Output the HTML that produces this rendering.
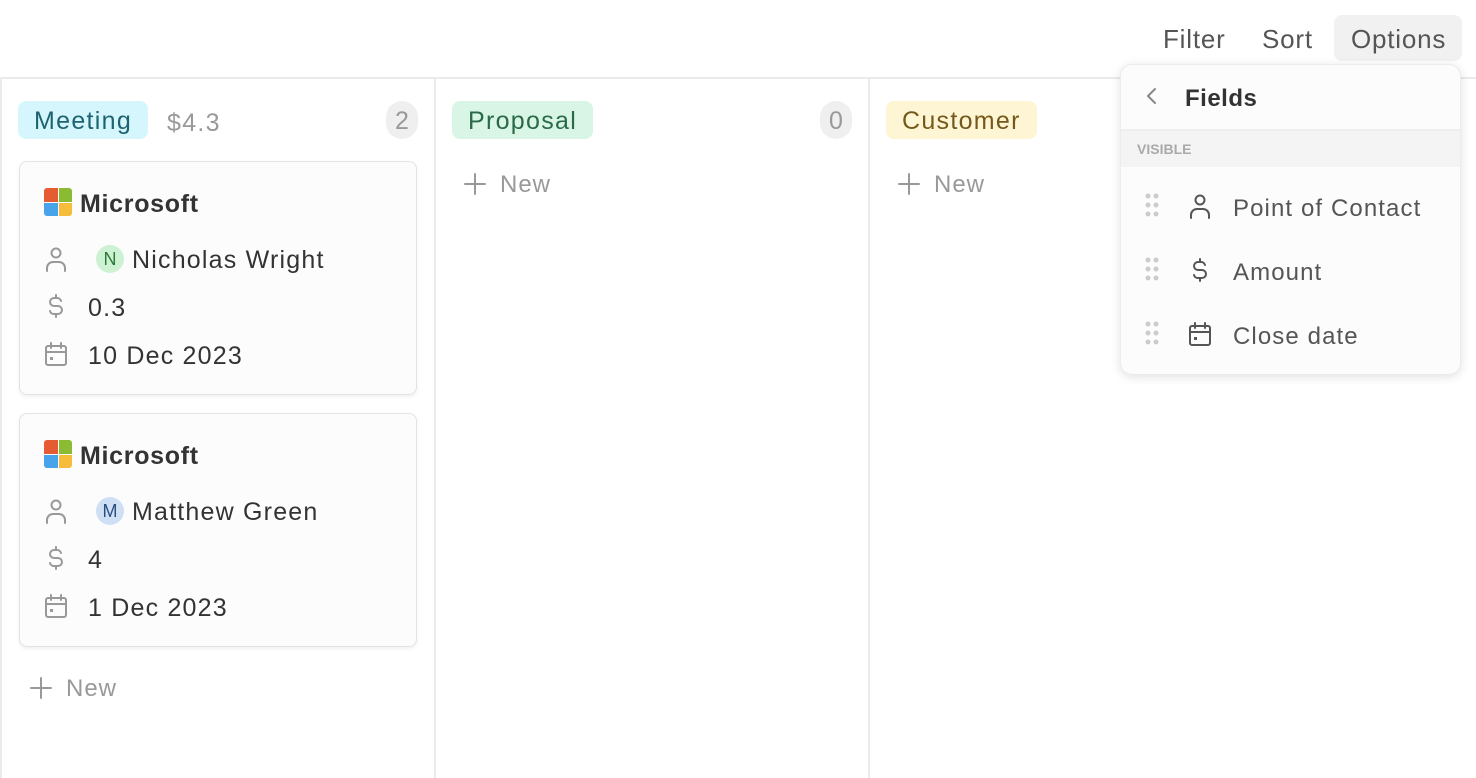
<!DOCTYPE html>
<html><head><meta charset="utf-8"><style>
*{box-sizing:border-box;margin:0;padding:0}
body{width:1476px;height:764px;overflow:hidden;background:#fff;font-family:"Liberation Sans",sans-serif;position:relative;color:#333}
.abs{position:absolute}
.topline{left:0;top:77px;width:1476px;height:2px;background:#ebebeb}
.vl{top:78px;width:2px;height:700px;background:#ebebeb}
.tb{font-size:26px;color:#555;top:24px;letter-spacing:0.8px}
.tag{height:38px;border-radius:8px;font-size:25px;line-height:40px;padding:0 16px;letter-spacing:1.3px}
.cnt{width:32px;height:38px;border-radius:16px;background:#efefef;color:#999;font-size:25px;line-height:40px;text-align:center}
.card{left:19px;width:398px;height:234px;border:1px solid #e3e3e3;border-radius:8px;background:#fcfcfc;box-shadow:0 2px 4px rgba(0,0,0,.06)}
.ms{width:28px;height:28px;display:grid;grid-template-columns:1fr 1fr;gap:1px;border-radius:3px;overflow:hidden}
.t24{font-size:25px;color:#333;letter-spacing:1.2px}
.new{font-size:24px;color:#999;letter-spacing:1px}
svg{position:absolute;fill:none;stroke:#999;stroke-width:2;stroke-linecap:round;stroke-linejoin:round}
.av{width:28px;height:28px;border-radius:14px;font-size:18px;line-height:28px;text-align:center}
.di{font-size:24px;color:#555;letter-spacing:1.1px}
</style></head><body>
<div class="abs topline"></div>
<div class="abs vl" style="left:0"></div>
<div class="abs vl" style="left:434px"></div>
<div class="abs vl" style="left:868px"></div>

<div class="abs tb" style="left:1163px">Filter</div>
<div class="abs tb" style="left:1262px">Sort</div>
<div class="abs" style="left:1334px;top:15px;width:128px;height:46px;border-radius:8px;background:#f1f1f1"></div>
<div class="abs tb" style="left:1351px">Options</div>

<div class="abs tag" style="left:18px;top:101px;background:#d5f6fd;color:#1e6370">Meeting</div>
<div class="abs" style="left:167px;top:109px;font-size:25px;color:#999;letter-spacing:1.3px">$4.3</div>
<div class="abs cnt" style="left:386px;top:101px">2</div>

<div class="abs card" style="top:161px"></div>
<div class="abs card" style="top:413px"></div>

<svg width="1476" height="764" style="left:0;top:0" stroke="#999">
  <path d="M31 688h20M41 678v20"/>
  <path d="M465 184h20M475 174v20"/>
  <path d="M899 184h20M909 174v20"/>
</svg>
<div class="abs new" style="left:66px;top:675px">New</div>
<div class="abs new" style="left:500px;top:171px">New</div>
<div class="abs new" style="left:934px;top:171px">New</div>

<div class="abs tag" style="left:452px;top:101px;background:#d9f5e6;color:#2a6a48">Proposal</div>
<div class="abs cnt" style="left:820px;top:101px">0</div>
<div class="abs tag" style="left:886px;top:101px;background:#fdf5d4;color:#75591a">Customer</div>

<div class="abs" style="left:1120px;top:64px;width:341px;height:311px;border-radius:12px;background:#fcfcfc;box-shadow:0 2px 10px rgba(0,0,0,.12);border:1px solid #ececec;overflow:hidden">
  <div class="abs" style="left:0;top:64px;width:341px;height:2px;background:#eeeeee"></div>
  <div class="abs" style="left:0;top:66px;width:341px;height:36px;background:#f4f4f4"></div>
  <div class="abs" style="left:16px;top:76px;font-size:14px;font-weight:bold;color:#aaa">VISIBLE</div>
  <div class="abs" style="left:64px;top:20px;font-size:24px;font-weight:bold;color:#333;letter-spacing:0.5px">Fields</div>
  <div class="abs di" style="left:112px;top:130px">Point of Contact</div>
  <div class="abs di" style="left:112px;top:194px">Amount</div>
  <div class="abs di" style="left:112px;top:258px">Close date</div>
</div>
<svg style="left:1140px;top:84px" width="24" height="24" viewBox="0 0 24 24"><path d="M15 5l-7 7 7 7" stroke="#888"/></svg>

<svg width="1476" height="764" style="left:0;top:0;stroke:none">
  <g fill="#ccc">
    <circle cx="1148" cy="196" r="2.5"/><circle cx="1156" cy="196" r="2.5"/><circle cx="1148" cy="205" r="2.5"/><circle cx="1156" cy="205" r="2.5"/><circle cx="1148" cy="214" r="2.5"/><circle cx="1156" cy="214" r="2.5"/>
    <circle cx="1148" cy="260" r="2.5"/><circle cx="1156" cy="260" r="2.5"/><circle cx="1148" cy="269" r="2.5"/><circle cx="1156" cy="269" r="2.5"/><circle cx="1148" cy="278" r="2.5"/><circle cx="1156" cy="278" r="2.5"/>
    <circle cx="1148" cy="324" r="2.5"/><circle cx="1156" cy="324" r="2.5"/><circle cx="1148" cy="333" r="2.5"/><circle cx="1156" cy="333" r="2.5"/><circle cx="1148" cy="342" r="2.5"/><circle cx="1156" cy="342" r="2.5"/>
  </g>
</svg>

<svg width="1476" height="764" style="left:0;top:0" stroke="#999">
  <g transform="translate(44,247)"><circle cx="12" cy="6" r="4.5"/><path d="M3 24v-3a6 6 0 0 1 6-6h6a6 6 0 0 1 6 6v3"/></g>
  <g transform="translate(44,294)"><path d="M17 7a4 4 0 0 0-4-3h-3a4 4 0 0 0 0 8h4a4 4 0 0 1 0 8h-4a4 4 0 0 1-4-3M12 1v3M12 20v3"/></g>
  <g transform="translate(44,342)"><rect x="2" y="4" width="20" height="19" rx="2"/><path d="M2 10h20M7 1v5M17 1v5"/><rect x="6" y="15" width="3" height="3" fill="#999" stroke="none"/></g>
  <g transform="translate(44,499)"><circle cx="12" cy="6" r="4.5"/><path d="M3 24v-3a6 6 0 0 1 6-6h6a6 6 0 0 1 6 6v3"/></g>
  <g transform="translate(44,546)"><path d="M17 7a4 4 0 0 0-4-3h-3a4 4 0 0 0 0 8h4a4 4 0 0 1 0 8h-4a4 4 0 0 1-4-3M12 1v3M12 20v3"/></g>
  <g transform="translate(44,594)"><rect x="2" y="4" width="20" height="19" rx="2"/><path d="M2 10h20M7 1v5M17 1v5"/><rect x="6" y="15" width="3" height="3" fill="#999" stroke="none"/></g>
  <g transform="translate(1188,194)" stroke="#555"><circle cx="12" cy="6" r="4.5"/><path d="M3 24v-3a6 6 0 0 1 6-6h6a6 6 0 0 1 6 6v3"/></g>
  <g transform="translate(1188,258)" stroke="#555"><path d="M17 7a4 4 0 0 0-4-3h-3a4 4 0 0 0 0 8h4a4 4 0 0 1 0 8h-4a4 4 0 0 1-4-3M12 1v3M12 20v3"/></g>
  <g transform="translate(1188,322)" stroke="#555"><rect x="2" y="4" width="20" height="19" rx="2"/><path d="M2 10h20M7 1v5M17 1v5"/><rect x="6" y="15" width="3" height="3" fill="#555" stroke="none"/></g>
</svg>

<div class="abs ms" style="left:44px;top:188px"><i style="background:#e55b33"></i><i style="background:#8bba33"></i><i style="background:#49a3ea"></i><i style="background:#f6bc3c"></i></div>
<div class="abs t24" style="left:80px;top:190px;font-weight:bold;color:#333;letter-spacing:0.7px">Microsoft</div>
<div class="abs av" style="left:96px;top:245px;background:#cdf2d3;color:#2d7a3a">N</div>
<div class="abs t24" style="left:132px;top:246px">Nicholas Wright</div>
<div class="abs t24" style="left:88px;top:294px">0.3</div>
<div class="abs t24" style="left:88px;top:342px">10 Dec 2023</div>

<div class="abs ms" style="left:44px;top:440px"><i style="background:#e55b33"></i><i style="background:#8bba33"></i><i style="background:#49a3ea"></i><i style="background:#f6bc3c"></i></div>
<div class="abs t24" style="left:80px;top:442px;font-weight:bold;color:#333;letter-spacing:0.7px">Microsoft</div>
<div class="abs av" style="left:96px;top:497px;background:#cfe0f5;color:#2a4f80">M</div>
<div class="abs t24" style="left:132px;top:498px">Matthew Green</div>
<div class="abs t24" style="left:88px;top:546px">4</div>
<div class="abs t24" style="left:88px;top:594px">1 Dec 2023</div>
</body></html>
